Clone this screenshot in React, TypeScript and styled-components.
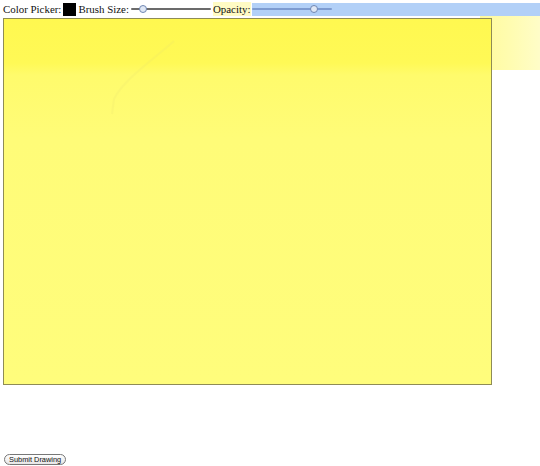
import styled, { createGlobalStyle } from "styled-components"

const Global = createGlobalStyle`
  html, body {
    margin: 0;
    padding: 0;
    background: #fff;
  }
  body {
    font-family: "Liberation Serif", "DejaVu Serif", serif;
    color: #111;
  }
`

const Page = styled.div`
  width: 540px;
  height: 466px;
  position: relative;
  overflow: hidden;
`

const Glow = styled.div`
  position: absolute;
  left: 480px;
  top: 16px;
  width: 60px;
  height: 54px;
  background: linear-gradient(90deg, #fffb9c 0%, #fffcb0 50%, #fffdc8 100%);
`

const Toolbar = styled.div`
  position: relative;
  display: flex;
  align-items: center;
  height: 16px;
  padding: 1px 0 0 3px;
  font-size: 10.9px;
  line-height: 14px;
  white-space: nowrap;
`

const Label = styled.span<{ $tint?: string }>`
  background: ${({ $tint }) => $tint || "transparent"};
  padding-right: 1px;
`

const Swatch = styled.span`
  display: inline-block;
  width: 13px;
  height: 13px;
  background: #000;
  margin: 0 2px 0 1px;
`

const SliderWrap = styled.div<{ $bg?: string; $grow?: boolean }>`
  display: flex;
  align-items: center;
  height: 13px;
  background: ${({ $bg }) => $bg || "transparent"};
  flex: ${({ $grow }) => ($grow ? "1" : "none")};
  margin-left: 1px;
`

const Track = styled.div<{ $color: string }>`
  position: relative;
  width: 80px;
  height: 2px;
  background: ${({ $color }) => $color};
  border-radius: 1px;
`

const Thumb = styled.span<{ $at: number }>`
  position: absolute;
  left: ${({ $at }) => $at}px;
  top: -3px;
  width: 6px;
  height: 6px;
  border-radius: 50%;
  border: 1px solid #6f86b3;
  background: #dfe7f5;
`

const Canvas = styled.div`
  position: relative;
  margin: 1px 0 0 3px;
  width: 487px;
  height: 365px;
  border: 1px solid #8f8c55;
  background: linear-gradient(
    180deg,
    #fff850 0px,
    #fff956 44px,
    #fffb6c 56px,
    #fffc78 120px,
    #fffd7c 100%
  );
`

const Stroke = styled.svg`
  position: absolute;
  left: 100px;
  top: 20px;
  opacity: 0.18;
`

const Footer = styled.div`
  padding: 69px 0 0 4px;
`

const SubmitButton = styled.button`
  display: block;
  font-family: "Liberation Sans", Arial, sans-serif;
  font-size: 7.4px;
  line-height: 9px;
  padding: 0 4px;
  border: 1px solid #777;
  border-radius: 6px;
  background: linear-gradient(180deg, #ffffff, #e6e6e6);
  color: #111;
`

export default function App() {
  return (
    <>
      <Global />
      <Page>
        <Glow />
        <Toolbar>
          <Label>Color Picker:</Label>
          <Swatch />
          <Label>Brush Size:</Label>
          <SliderWrap>
            <Track $color="#6b6b6b">
              <Thumb $at={8} />
            </Track>
          </SliderWrap>
          <Label $tint="#fffbc4" style={{ marginLeft: 2 }}>
            Opacity:
          </Label>
          <SliderWrap $bg="#b2d0f7" $grow>
            <Track $color="#7d9bd0">
              <Thumb $at={58} />
            </Track>
          </SliderWrap>
        </Toolbar>
        <Canvas>
          <Stroke width="80" height="80" viewBox="0 0 80 80">
            <path
              d="M70 2 C 50 20, 20 40, 10 60 L 8 75"
              stroke="#e8e070"
              strokeWidth="2"
              fill="none"
            />
          </Stroke>
        </Canvas>
        <Footer>
          <SubmitButton>Submit Drawing</SubmitButton>
        </Footer>
      </Page>
    </>
  )
}
